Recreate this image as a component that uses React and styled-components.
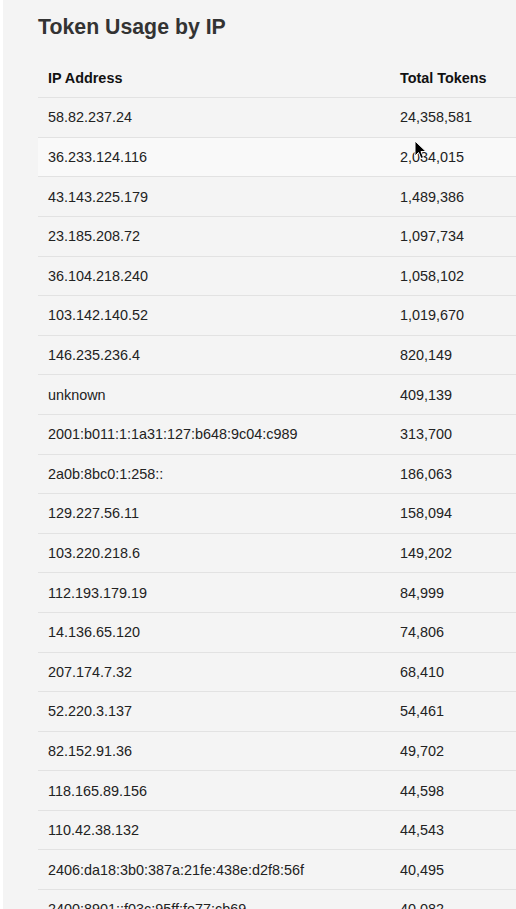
import React from 'react'
import styled, { createGlobalStyle } from 'styled-components'

const rows = [
  ['58.82.237.24', '24,358,581'],
  ['36.233.124.116', '2,034,015'],
  ['43.143.225.179', '1,489,386'],
  ['23.185.208.72', '1,097,734'],
  ['36.104.218.240', '1,058,102'],
  ['103.142.140.52', '1,019,670'],
  ['146.235.236.4', '820,149'],
  ['unknown', '409,139'],
  ['2001:b011:1:1a31:127:b648:9c04:c989', '313,700'],
  ['2a0b:8bc0:1:258::', '186,063'],
  ['129.227.56.11', '158,094'],
  ['103.220.218.6', '149,202'],
  ['112.193.179.19', '84,999'],
  ['14.136.65.120', '74,806'],
  ['207.174.7.32', '68,410'],
  ['52.220.3.137', '54,461'],
  ['82.152.91.36', '49,702'],
  ['118.165.89.156', '44,598'],
  ['110.42.38.132', '44,543'],
  ['2406:da18:3b0:387a:21fe:438e:d2f8:56f', '40,495'],
  ['2400:8901::f03c:95ff:fe77:cb69', '40,082'],
]

export default function App() {
  return (
    <>
      <GlobalStyle />
      <Page>
        <Panel>
          <Title>Token Usage by IP</Title>
          <Table>
            <HeadRow>
              <HeadCell>IP Address</HeadCell>
              <HeadCell>Total Tokens</HeadCell>
            </HeadRow>
            {rows.map(([ip, total], i) => (
              <Row key={ip} $hover={i === 1}>
                <Cell>{ip}</Cell>
                <Cell>{total}</Cell>
              </Row>
            ))}
          </Table>
        </Panel>
        <Cursor width="14" height="20" viewBox="0 0 14 20">
          <path d="M1 1 L1 16 L4.5 12.5 L7 18.5 L9.5 17.5 L7 11.5 L12 11.5 Z" fill="#000" stroke="#fff" strokeWidth="1" />
        </Cursor>
      </Page>
    </>
  )
}

const GlobalStyle = createGlobalStyle`
    html, body {
        margin: 0;
        background: #fff;
        overflow: hidden;
    }
    body {
        font-family: "Liberation Sans", Arial, sans-serif;
    }
`

const Page = styled.div`
    position: relative;
    width: 516px;
    height: 909px;
    overflow: hidden;
`

const Panel = styled.div`
    margin-left: 3px;
    width: 760px;
    min-height: 909px;
    background: #f4f4f4;
    padding: 15px 0 0 35px;
    box-sizing: border-box;
`

const Title = styled.h2`
    margin: 0 0 18.6px;
    font-size: 21.3px;
    font-weight: bold;
    color: #333;
    line-height: normal;
`

const Table = styled.div`
    display: flex;
    flex-direction: column;
    width: 700px;
`

const HeadRow = styled.div`
    display: grid;
    grid-template-columns: 352px 1fr;
    align-items: center;
    height: 39.6px;
    box-sizing: border-box;
    border-bottom: 1px solid #e2e2e2;
`

const Row = styled(HeadRow)`
    background: ${p => (p.$hover ? '#f9f9f9' : 'transparent')};
`

const HeadCell = styled.div`
    padding: 0 10px;
    font-size: 14.4px;
    font-weight: bold;
    color: #111;
`

const Cell = styled.div`
    padding: 0 10px;
    font-size: 14.4px;
    color: #222;
    white-space: nowrap;
`

const Cursor = styled.svg`
    position: absolute;
    left: 414px;
    top: 140px;
`
